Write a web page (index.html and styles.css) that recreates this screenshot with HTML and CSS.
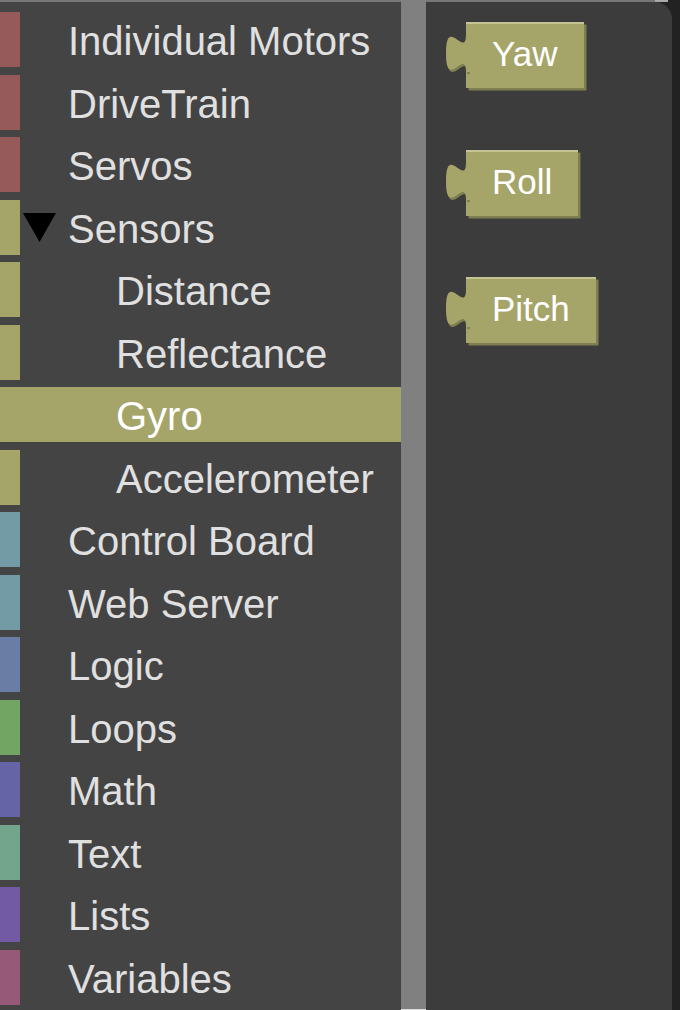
FILE: index.html
```html
<!DOCTYPE html>
<html lang="en">
<head>
<meta charset="utf-8">
<title>Toolbox</title>
<link rel="stylesheet" href="styles.css">
</head>
<body>
<div class="workspace">
  <nav class="toolbox">
    <div class="cat red"><span class="stripe"></span><span class="label">Individual Motors</span></div>
    <div class="cat red"><span class="stripe"></span><span class="label">DriveTrain</span></div>
    <div class="cat red"><span class="stripe"></span><span class="label">Servos</span></div>
    <div class="cat olive toggle"><span class="stripe"></span><svg class="arrow" width="33" height="29" viewBox="0 0 33 29"><polygon points="0,0 33,0 16.5,29" fill="#000"/></svg><span class="label">Sensors</span></div>
    <div class="cat olive child"><span class="stripe"></span><span class="label">Distance</span></div>
    <div class="cat olive child"><span class="stripe"></span><span class="label">Reflectance</span></div>
    <div class="cat olive child selected"><span class="stripe"></span><span class="label">Gyro</span></div>
    <div class="cat olive child"><span class="stripe"></span><span class="label">Accelerometer</span></div>
    <div class="cat teal"><span class="stripe"></span><span class="label">Control Board</span></div>
    <div class="cat teal"><span class="stripe"></span><span class="label">Web Server</span></div>
    <div class="cat logic"><span class="stripe"></span><span class="label">Logic</span></div>
    <div class="cat loops"><span class="stripe"></span><span class="label">Loops</span></div>
    <div class="cat math"><span class="stripe"></span><span class="label">Math</span></div>
    <div class="cat text"><span class="stripe"></span><span class="label">Text</span></div>
    <div class="cat lists"><span class="stripe"></span><span class="label">Lists</span></div>
    <div class="cat vars"><span class="stripe"></span><span class="label">Variables</span></div>
  </nav>
  <div class="scrollbar"><div class="scroll-end"></div></div>
  <div class="flyout-col">
    <div class="flyout-edge"></div>
    <section class="flyout">
      <div class="block">
        <svg class="tab" width="25" height="52.5" viewBox="0 0 10 21"><path d="M8,5 c0,10 -8,-8 -8,7.5 s8,-2.5 8,7.5 L9,20 L9,5 Z" transform="translate(0.5,0.9)" fill="#7e7e50"/><path d="M8,5 c0,10 -8,-8 -8,7.5 s8,-2.5 8,7.5 L10,20 L10,5 Z" fill="#a5a56a"/></svg>
        <span class="block-label">Yaw</span>
      </div>
      <div class="block">
        <svg class="tab" width="25" height="52.5" viewBox="0 0 10 21"><path d="M8,5 c0,10 -8,-8 -8,7.5 s8,-2.5 8,7.5 L9,20 L9,5 Z" transform="translate(0.5,0.9)" fill="#7e7e50"/><path d="M8,5 c0,10 -8,-8 -8,7.5 s8,-2.5 8,7.5 L10,20 L10,5 Z" fill="#a5a56a"/></svg>
        <span class="block-label">Roll</span>
      </div>
      <div class="block">
        <svg class="tab" width="25" height="52.5" viewBox="0 0 10 21"><path d="M8,5 c0,10 -8,-8 -8,7.5 s8,-2.5 8,7.5 L9,20 L9,5 Z" transform="translate(0.5,0.9)" fill="#7e7e50"/><path d="M8,5 c0,10 -8,-8 -8,7.5 s8,-2.5 8,7.5 L10,20 L10,5 Z" fill="#a5a56a"/></svg>
        <span class="block-label">Pitch</span>
      </div>
    </section>
  </div>
</div>
</body>
</html>
```

FILE: styles.css
```css
html, body {
  margin: 0;
  padding: 0;
}
body {
  background: #222;
  font-family: "Liberation Sans", Arial, sans-serif;
  width: 680px;
  height: 1010px;
  overflow: hidden;
}
.workspace {
  display: flex;
  height: 1010px;
}
.toolbox {
  width: 401px;
  flex: none;
  background: #444;
  border-top: 2px solid #777;
  box-sizing: border-box;
  padding-top: 10px;
  display: flex;
  flex-direction: column;
  gap: 7.5px;
}
.cat {
  height: 55px;
  display: flex;
  align-items: center;
  flex: none;
}
.stripe {
  width: 20px;
  height: 55px;
  flex: none;
}
.label {
  font-size: 40px;
  line-height: 55px;
  margin-top: 4px;
  color: #e0e0e0;
  padding-left: 48px;
  white-space: nowrap;
}
.child .label {
  padding-left: 96px;
}
.toggle .arrow {
  margin-left: 3px;
  flex: none;
}
.toggle .label {
  padding-left: 12px;
}
.selected {
  background: #a5a56a;
}
.selected .label {
  color: #fff;
}
.red .stripe { background: #975a5b; }
.olive .stripe { background: #a5a56a; }
.teal .stripe { background: #739ba6; }
.logic .stripe { background: #697da5; }
.loops .stripe { background: #72a564; }
.math .stripe { background: #6464a6; }
.text .stripe { background: #73a58c; }
.lists .stripe { background: #735aa5; }
.vars .stripe { background: #965a78; }

.scrollbar {
  width: 25px;
  flex: none;
  background: #808080;
  display: flex;
  flex-direction: column;
  justify-content: flex-end;
}
.scroll-end {
  height: 1px;
  background: #ddd;
}
.flyout-col {
  width: 246px;
  flex: none;
  display: flex;
  flex-direction: column;
}
.flyout-edge {
  height: 2px;
  width: 242px;
  background: linear-gradient(to right, #777 229px, #aaa 229px);
}
.flyout {
  flex: 1;
  background: #3c3c3c;
  border-top-right-radius: 17px;
  padding: 20px 0 0 40px;
  display: flex;
  flex-direction: column;
  align-items: flex-start;
  gap: 61.5px;
}
.block {
  position: relative;
  display: flex;
}
.tab {
  position: absolute;
  left: -20px;
  top: 0;
  overflow: visible;
}
.block-label {
  display: block;
  height: 66px;
  line-height: 64px;
  padding: 0 26px;
  font-size: 35px;
  color: #fff;
  background: #a5a56a;
  box-shadow: inset 0 2px 0 #c3c393, 2.5px 2.5px 0 #7e7e50;
  white-space: nowrap;
}
```
